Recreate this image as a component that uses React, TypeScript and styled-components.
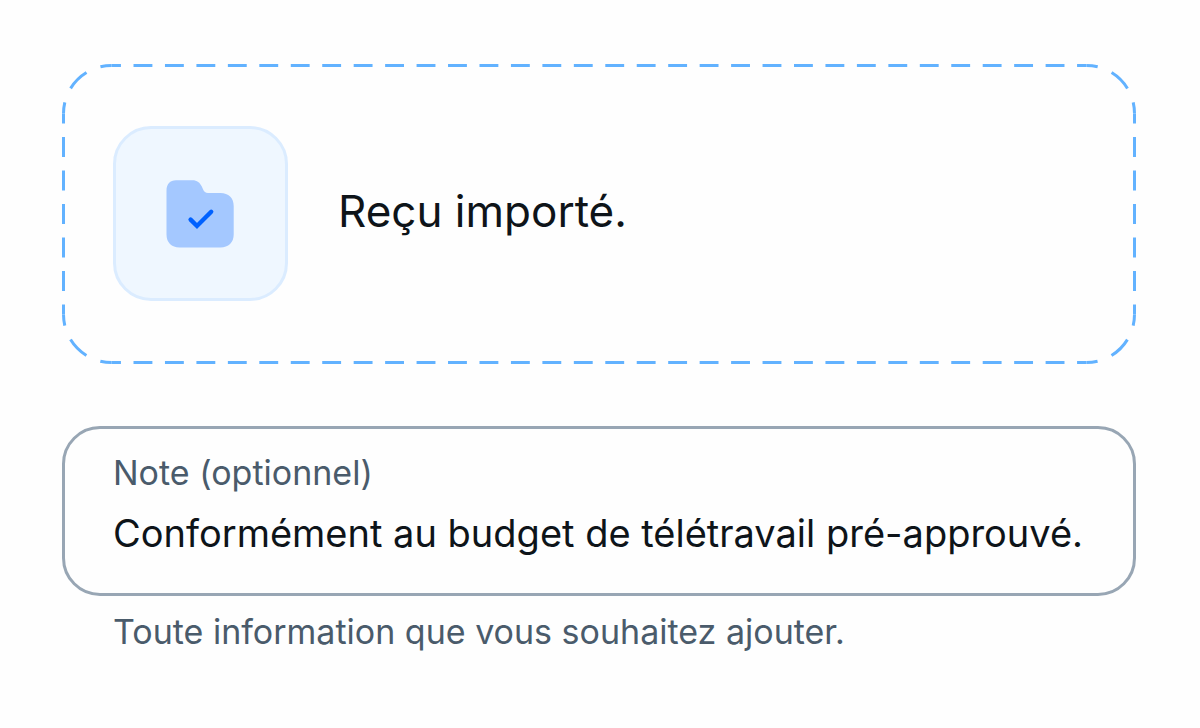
import React, { useId, useLayoutEffect, useRef, useState } from "react";
import styled, { createGlobalStyle } from "styled-components";

const GlobalStyle = createGlobalStyle`
  *, *::before, *::after { box-sizing: border-box; }
  body {
    margin: 0;
    background: #fefefe;
    color: #0e1419;
    font-family: Inter, "Liberation Sans", sans-serif;
    -webkit-font-smoothing: antialiased;
  }
`;

const Page = styled.main`
  display: flex;
  flex-direction: column;
  gap: 62px;
  padding: 64px 64px 64px 62px;
`;

const DropZone = styled.section`
  position: relative;
  display: flex;
  align-items: center;
  gap: 50px;
  padding: 62px 51px 63px;
`;

const FrameSvg = styled.svg`
  position: absolute;
  inset: 0;
  width: 100%;
  height: 100%;
  pointer-events: none;
`;

const IconTile = styled.div`
  flex: none;
  display: grid;
  place-items: center;
  width: 175px;
  height: 175px;
  border: 3px solid #dbecff;
  border-radius: 38px;
  background: #eff7ff;
`;

const Status = styled.p`
  margin: 0;
  padding-bottom: 6px;
  font-size: 44px;
  line-height: 56px;
`;

const FieldGroup = styled.div`
  display: flex;
  flex-direction: column;
  gap: 14px;
`;

const Field = styled.div`
  display: flex;
  flex-direction: column;
  gap: 10px;
  padding: 22px 48px 32px;
  border: 3px solid #98a6b4;
  border-radius: 38px;
`;

const Label = styled.label`
  color: #4a5b6b;
  font-size: 34px;
  line-height: 44px;
`;

const Input = styled.input`
  width: 100%;
  height: 56px;
  padding: 0;
  border: 0;
  outline: 0;
  background: transparent;
  color: #0e1419;
  font: inherit;
  font-size: 38px;
`;

const Hint = styled.p`
  margin: 0;
  padding: 0 51px;
  color: #4a5b6b;
  font-size: 34px;
  line-height: 44px;
`;

const STROKE = 3;
const RADIUS = 48;
const DASH_PERIOD = 31;
const DASH_SHARE = 0.6;

/* Splits a segment into whole periods so that it starts and ends on half a dash. */
function dashFor(length: number) {
  const count = Math.max(1, Math.round(length / DASH_PERIOD));
  const period = length / count;
  const dash = period * DASH_SHARE;
  return { strokeDasharray: `${dash} ${period - dash}`, strokeDashoffset: dash / 2 };
}

function DashedFrame() {
  const ref = useRef<SVGSVGElement>(null);
  const [size, setSize] = useState({ width: 0, height: 0 });

  useLayoutEffect(() => {
    const node = ref.current;
    if (!node) return;
    const measure = () => {
      const { width, height } = node.getBoundingClientRect();
      setSize({ width, height });
    };
    measure();
    const observer = new ResizeObserver(measure);
    observer.observe(node);
    return () => observer.disconnect();
  }, []);

  const near = STROKE / 2;
  const right = size.width - near;
  const bottom = size.height - near;
  const across = right - near - 2 * RADIUS;
  const down = bottom - near - 2 * RADIUS;
  const arc = (Math.PI * RADIUS) / 2;
  const r = RADIUS;

  const segments = [
    { d: `M${near + r} ${near}H${right - r}`, length: across },
    { d: `M${right - r} ${near}a${r} ${r} 0 0 1 ${r} ${r}`, length: arc },
    { d: `M${right} ${near + r}V${bottom - r}`, length: down },
    { d: `M${right} ${bottom - r}a${r} ${r} 0 0 1 ${-r} ${r}`, length: arc },
    { d: `M${right - r} ${bottom}H${near + r}`, length: across },
    { d: `M${near + r} ${bottom}a${r} ${r} 0 0 1 ${-r} ${-r}`, length: arc },
    { d: `M${near} ${bottom - r}V${near + r}`, length: down },
    { d: `M${near} ${near + r}a${r} ${r} 0 0 1 ${r} ${-r}`, length: arc },
  ];

  return (
    <FrameSvg ref={ref} aria-hidden="true" fill="none" stroke="#62b2ff" strokeWidth={STROKE}>
      {across > 0 &&
        down > 0 &&
        segments.map((s) => <path key={s.d} d={s.d} {...dashFor(s.length)} />)}
    </FrameSvg>
  );
}

function FolderCheckIcon() {
  return (
    <svg width="69" height="69" viewBox="0 -1 69 69" fill="none" aria-hidden="true">
      <path
        d="M0.5 10.5C0.5 4 4 0.2 10 0.2H26.5C31 0.2 34 2.5 35.8 6.5L37 9.3C38.2 12 39.5 13 42 13H54.5C62.5 13 67.7 18 67.7 26V54.5C67.7 62.5 62.5 67.4 54.5 67.4H13.5C5.5 67.4 0.5 62.5 0.5 54.5Z"
        fill="#a4c8ff"
      />
      <path
        d="M24.6 39.6L31 46L45.2 31.8"
        stroke="#0061ff"
        strokeWidth="4.4"
        strokeLinecap="round"
      />
    </svg>
  );
}

export default function App() {
  const inputId = useId();
  const hintId = useId();
  const [note, setNote] = useState("Conformément au budget de télétravail pré-approuvé.");

  return (
    <>
      <GlobalStyle />
      <Page lang="fr">
        <DropZone>
          <DashedFrame />
          <IconTile>
            <FolderCheckIcon />
          </IconTile>
          <Status role="status">Reçu importé.</Status>
        </DropZone>
        <FieldGroup>
          <Field>
            <Label htmlFor={inputId}>Note (optionnel)</Label>
            <Input
              id={inputId}
              type="text"
              value={note}
              aria-describedby={hintId}
              onChange={(e) => setNote(e.target.value)}
            />
          </Field>
          <Hint id={hintId}>Toute information que vous souhaitez ajouter.</Hint>
        </FieldGroup>
      </Page>
    </>
  );
}
